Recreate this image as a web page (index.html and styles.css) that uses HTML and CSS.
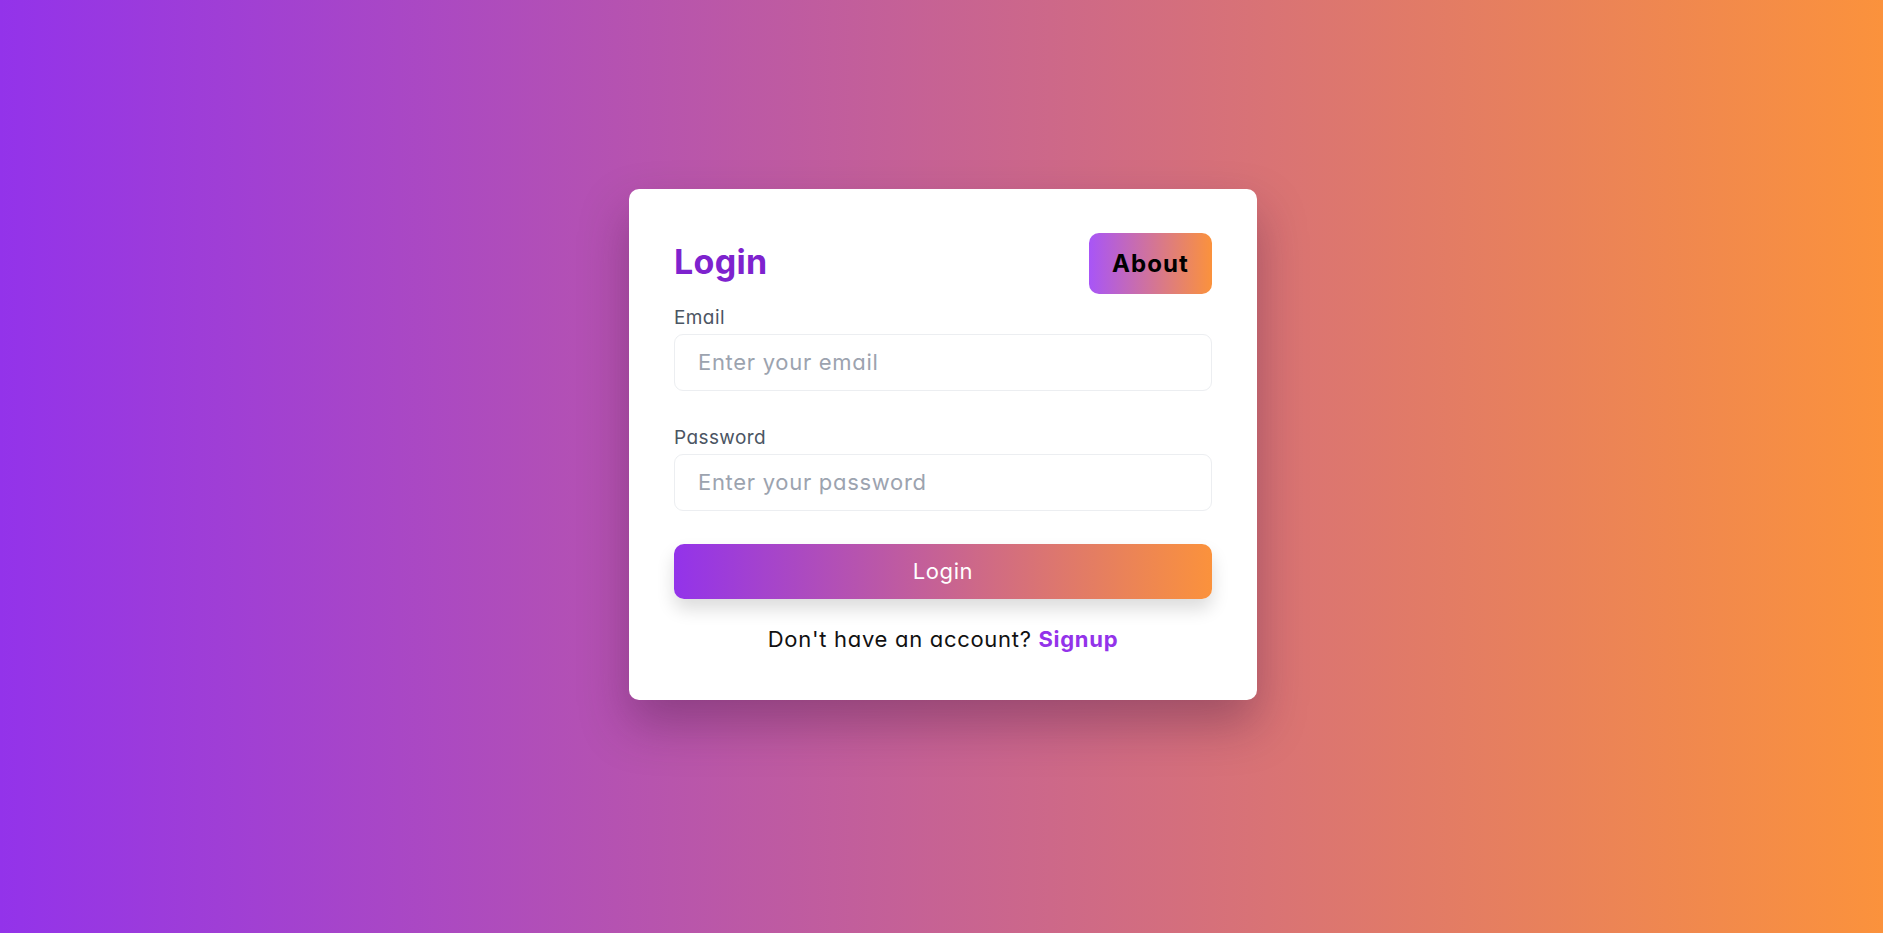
FILE: index.html
```html
<!DOCTYPE html>
<html lang="en">
<head>
<meta charset="utf-8">
<title>Login</title>
<link rel="stylesheet" href="styles.css">
</head>
<body>
<main class="page">
  <form class="card">
    <div class="card-head">
      <h2 class="title">Login</h2>
      <button type="button" class="about-btn">About</button>
    </div>
    <div class="field">
      <label class="label" for="email">Email</label>
      <input class="input" id="email" type="email" placeholder="Enter your email">
    </div>
    <div class="field">
      <label class="label" for="password">Password</label>
      <input class="input" id="password" type="password" placeholder="Enter your password">
    </div>
    <button type="button" class="login-btn">Login</button>
    <p class="signup">Don't have an account? <a href="#" class="signup-link">Signup</a></p>
  </form>
</main>
</body>
</html>
```
FILE: styles.css
```css
* { box-sizing: border-box; }
html, body { margin: 0; padding: 0; height: 100%; }
body {
  font-family: Inter, "Noto Sans", sans-serif;
  font-feature-settings: "cv11" 1;
}
.page {
  min-height: 100vh;
  display: flex;
  align-items: center;
  justify-content: center;
  padding: 0 0 45px 3px;
  background: linear-gradient(to right, #9333ea, #fb923c);
}
.card {
  width: 628px;
  background: #fff;
  border-radius: 10px;
  padding: 44px 45px 46px;
  display: flex;
  flex-direction: column;
  box-shadow: 0 24px 48px rgba(60, 20, 60, 0.35);
}
.card-head {
  display: flex;
  align-items: center;
  justify-content: space-between;
  height: 61px;
  margin-bottom: 10px;
}
.title {
  margin: 0 0 3px;
  font-size: 34px;
  font-weight: 700;
  color: #7e22ce;
  letter-spacing: 0.3px;
}
.about-btn {
  width: 123px;
  height: 61px;
  border: none;
  border-radius: 10px;
  background: linear-gradient(to right, #a855f7, #fb923c);
  color: #000;
  font-family: inherit;
  font-feature-settings: "cv11" 1;
  font-size: 24px;
  font-weight: 700;
  letter-spacing: 1.1px;
}
.field {
  display: flex;
  flex-direction: column;
  margin-bottom: 33px;
}
.label {
  font-size: 19px;
  line-height: 27px;
  letter-spacing: 0.4px;
  color: #4b5563;
  margin-bottom: 3px;
}
.input {
  height: 57px;
  border: 1.5px solid #eceef1;
  border-radius: 9px;
  padding: 0 23px;
  font-family: inherit;
  font-feature-settings: "cv11" 1;
  font-size: 22px;
  letter-spacing: 0.7px;
  color: #111;
  outline: none;
}
.input::placeholder { color: #9ca3af; }
.login-btn {
  height: 55px;
  border: none;
  border-radius: 10px;
  background: linear-gradient(to right, #9333ea, #fb923c);
  color: #fff;
  font-family: inherit;
  font-feature-settings: "cv11" 1;
  font-size: 22px;
  letter-spacing: 0.6px;
  box-shadow: 0 10px 18px rgba(0, 0, 0, 0.14);
}
.signup {
  margin: 25px 0 0;
  line-height: 30px;
  text-align: center;
  font-size: 22px;
  letter-spacing: 0.7px;
  color: #111;
}
.signup-link {
  color: #9333ea;
  font-weight: 700;
  text-decoration: none;
}
```
